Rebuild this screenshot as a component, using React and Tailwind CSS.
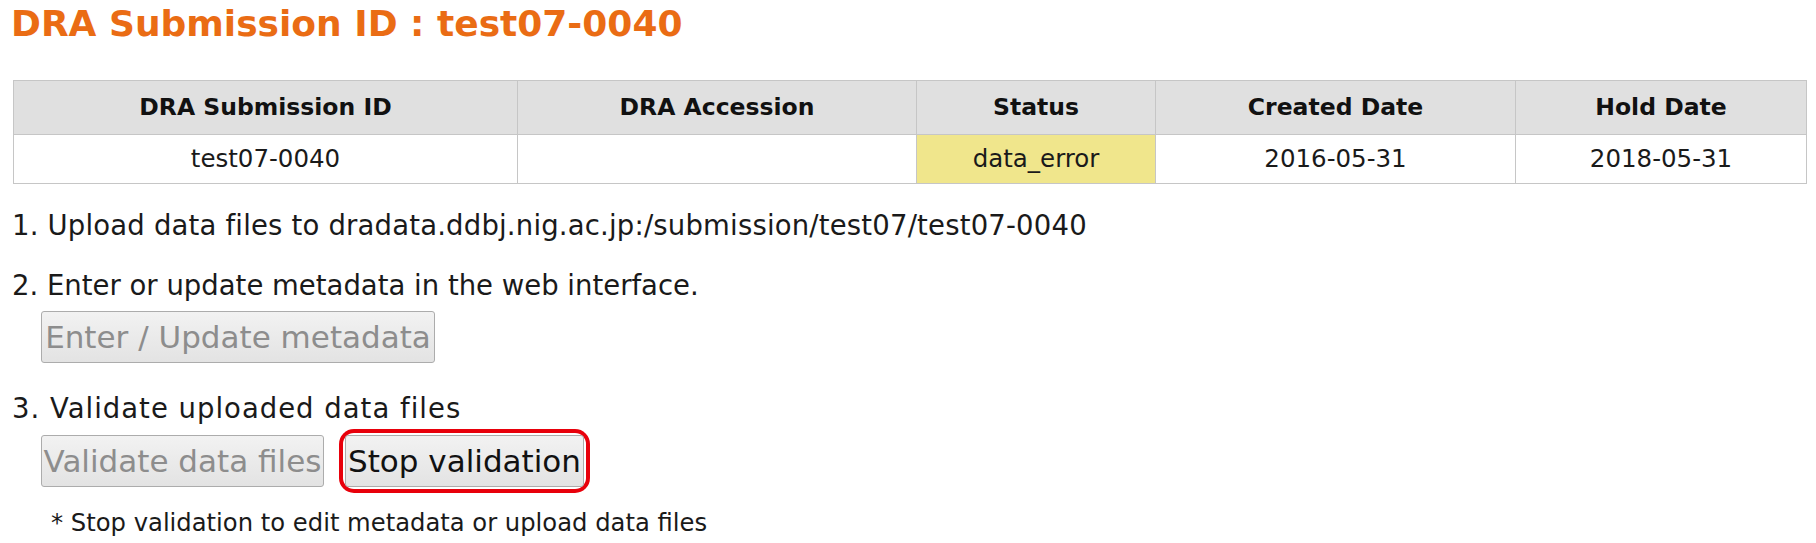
import React from 'react';

const columns = [
  { label: 'DRA Submission ID', width: 'w-[504px]' },
  { label: 'DRA Accession', width: 'w-[399px]' },
  { label: 'Status', width: 'w-[239px]' },
  { label: 'Created Date', width: 'w-[360px]' },
  { label: 'Hold Date', width: 'w-[291px]' },
];

const row = [
  { value: 'test07-0040' },
  { value: '' },
  { value: 'data_error', className: 'bg-[#f0e68c]' },
  { value: '2016-05-31' },
  { value: '2018-05-31' },
];

const Button = ({ children, disabled, className = '' }) => (
  <button
    disabled={disabled}
    className={`h-[52px] rounded-[3px] border border-[#acacac] bg-gradient-to-b from-[#f2f2f2] to-[#e3e3e3] text-[31px] leading-none ${
      disabled ? 'text-[#8d8d8d]' : 'text-[#111]'
    } ${className}`}
  >
    {children}
  </button>
);

export default function App() {
  return (
    <div className="w-[1816px] h-[543px] bg-white pt-[2px] pl-3 pr-[10px] text-[#1a1a1a] font-['DejaVu_Sans',Verdana,sans-serif] overflow-hidden">
      {/* Title */}
      <h1 className="text-[36px] leading-[44px] font-bold text-[#ea6c14] -ml-[1px]">
        DRA Submission ID : test07-0040
      </h1>

      {/* Submission table */}
      <table className="mt-[34px] ml-px table-fixed border-collapse w-[1793px]">
        <thead>
          <tr className="h-[54px] bg-[#e0e0e0] text-[23.5px]">
            {columns.map((col) => (
              <th
                key={col.label}
                className={`${col.width} border border-[#c6c6c6] font-bold text-center text-[#111]`}
              >
                {col.label}
              </th>
            ))}
          </tr>
        </thead>
        <tbody>
          <tr className="h-[49px] text-[24.5px]">
            {row.map((cell, i) => (
              <td
                key={i}
                className={`border border-[#c6c6c6] text-center ${cell.className || ''}`}
              >
                {cell.value}
              </td>
            ))}
          </tr>
        </tbody>
      </table>

      {/* Steps */}
      <div className="text-[27.5px] leading-[32px]">
        <p className="mt-[25px] tracking-[0.18px]">1. Upload data files to dradata.ddbj.nig.ac.jp:/submission/test07/test07-0040</p>

        <p className="mt-[28px]">2. Enter or update metadata in the web interface.</p>
        <div className="mt-[10px] ml-[29px]">
          <Button disabled className="w-[394px]">Enter / Update metadata</Button>
        </div>

        <p className="mt-[29px] tracking-[1px]">3. Validate uploaded data files</p>
        <div className="mt-[11px] ml-[29px] flex items-center gap-[21px]">
          <Button disabled className="w-[283px]">Validate data files</Button>
          <div className="rounded-[9px] ring-4 ring-[#e8000b] ring-offset-2">
            <Button className="w-[239px] block">Stop validation</Button>
          </div>
        </div>

        <p className="mt-[21px] ml-[39px] text-[24.25px] leading-[30px]">
          * Stop validation to edit metadata or upload data files
        </p>
      </div>
    </div>
  );
}
